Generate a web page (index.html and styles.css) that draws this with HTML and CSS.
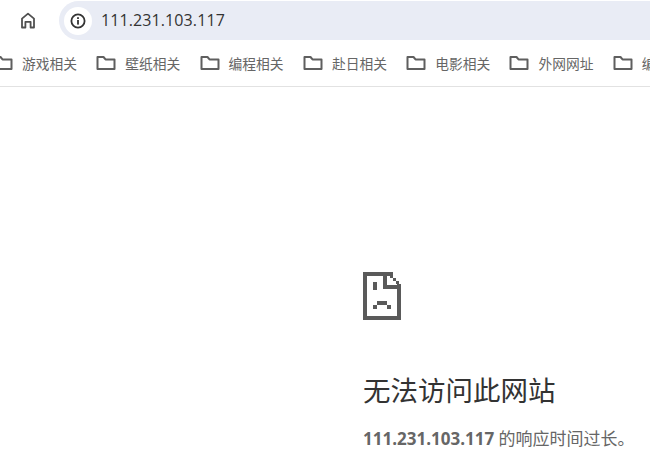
FILE: index.html
```html
<!DOCTYPE html>
<html lang="zh-CN">
<head>
  <meta charset="UTF-8" />
  <title>无法访问此网站</title>
  <link rel="stylesheet" href="styles.css">
</head>
<body>

  <div class="toolbar">
    <div class="home-btn">
      <svg width="16" height="17" viewBox="0 0 16 17" fill="none" stroke="#505050" stroke-width="1.800" stroke-linejoin="round">
        <path d="M2 15.500V6.600L8 1.600l6 5v8.900h-3.400V9.800H5.400v5.700z"/>
      </svg>
    </div>
    <div class="address">
      <div class="info-btn">
        <svg width="16" height="16" viewBox="0 0 16 16">
          <circle cx="8" cy="8" r="6.600" fill="none" stroke="#333" stroke-width="1.800"/>
          <rect x="7.100" y="7" width="1.800" height="4.600" fill="#333"/>
          <rect x="7.100" y="4.200" width="1.800" height="1.800" fill="#333"/>
        </svg>
      </div>
      <span class="url">111.231.103.117</span>
    </div>
  </div>

  <div class="bookmarks">
    <div class="bookmark">
      <svg class="folder" width="20" height="16" viewBox="0 0 20 16"><path d="M1.500 14V2h6l2 2.400h9V14z"/></svg>
      <span>游戏相关</span>
    </div>
    <div class="bookmark">
      <svg class="folder" width="20" height="16" viewBox="0 0 20 16"><path d="M1.500 14V2h6l2 2.400h9V14z"/></svg>
      <span>壁纸相关</span>
    </div>
    <div class="bookmark">
      <svg class="folder" width="20" height="16" viewBox="0 0 20 16"><path d="M1.500 14V2h6l2 2.400h9V14z"/></svg>
      <span>编程相关</span>
    </div>
    <div class="bookmark">
      <svg class="folder" width="20" height="16" viewBox="0 0 20 16"><path d="M1.500 14V2h6l2 2.400h9V14z"/></svg>
      <span>赴日相关</span>
    </div>
    <div class="bookmark">
      <svg class="folder" width="20" height="16" viewBox="0 0 20 16"><path d="M1.500 14V2h6l2 2.400h9V14z"/></svg>
      <span>电影相关</span>
    </div>
    <div class="bookmark">
      <svg class="folder" width="20" height="16" viewBox="0 0 20 16"><path d="M1.500 14V2h6l2 2.400h9V14z"/></svg>
      <span>外网网址</span>
    </div>
    <div class="bookmark">
      <svg class="folder" width="20" height="16" viewBox="0 0 20 16"><path d="M1.500 14V2h6l2 2.400h9V14z"/></svg>
      <span>编程相关</span>
    </div>
  </div>

  <div class="error-page">
    <svg class="sad-page" width="38" height="48" viewBox="0 0 38 48" fill="#5a5a5a" shape-rendering="crispEdges">
      <rect x="0" y="0" width="4" height="48"/>
      <rect x="0" y="0" width="30" height="4"/>
      <rect x="0" y="44" width="38" height="4"/>
      <rect x="34" y="12" width="4" height="36"/>
      <rect x="20" y="0" width="4" height="17"/>
      <rect x="20" y="13" width="18" height="4"/>
      <rect x="27" y="3" width="3" height="3"/>
      <rect x="30" y="6" width="3" height="3"/>
      <rect x="33" y="9" width="3" height="3"/>
      <rect x="10" y="10" width="4" height="8"/>
      <rect x="10" y="33" width="4" height="4"/>
      <rect x="14" y="29" width="10" height="4"/>
      <rect x="24" y="33" width="4" height="4"/>
    </svg>
    <h1>无法访问此网站</h1>
    <p><b>111.231.103.117</b> 的响应时间过长。</p>
  </div>

</body>
</html>
```

FILE: styles.css
```css
html, body {
  margin: 0;
  height: 466px;
  overflow: hidden;
}
body {
  font-family: "Open Sans", "Noto Sans CJK SC", sans-serif;
  background: #fff;
  color: #202124;
}
.toolbar {
  display: flex;
  align-items: center;
  height: 40px;
  padding-top: 1px;
  box-sizing: border-box;
}
.home-btn {
  display: flex;
  align-items: center;
  justify-content: center;
  width: 20px;
  margin-left: 18px;
  margin-right: 21px;
}
.address {
  flex: 1;
  display: flex;
  align-items: center;
  height: 39px;
  background: #e9ecf5;
  border-radius: 20px 0 0 20px;
}
.info-btn {
  display: flex;
  align-items: center;
  justify-content: center;
  width: 28px;
  height: 28px;
  margin-left: 5px;
  background: #fff;
  border-radius: 50%;
}
.url {
  margin-top: -2px;
  margin-left: 9px;
  font-size: 16px;
  letter-spacing: 0.1px;
  color: #333;
}
.bookmarks {
  display: flex;
  align-items: center;
  height: 46px;
  margin-left: -11px;
  border-bottom: 1px solid #e2e2e2;
  overflow: hidden;
  white-space: nowrap;
}
.bookmark {
  display: flex;
  align-items: center;
  flex: 0 0 103.3px;
  box-sizing: border-box;
  padding-left: 4px;
  font-size: 13.750px;
  color: #666;
}
.bookmark span {
  margin-left: 9px;
}
.folder {
  flex: none;
  fill: none;
  stroke: #5f5f5f;
  stroke-width: 2;
  stroke-linejoin: round;
}
.error-page {
  padding: 185px 0 0 363px;
}
.sad-page {
  display: block;
}
.error-page h1 {
  margin: 53px 0 0;
  font-size: 27.500px;
  line-height: 36px;
  font-weight: 400;
  color: #333;
}
.error-page p {
  margin: 20px 0 0;
  font-size: 17px;
  line-height: 20px;
  color: #666;
  white-space: nowrap;
}
.error-page b {
  font-weight: 700;
}
```
